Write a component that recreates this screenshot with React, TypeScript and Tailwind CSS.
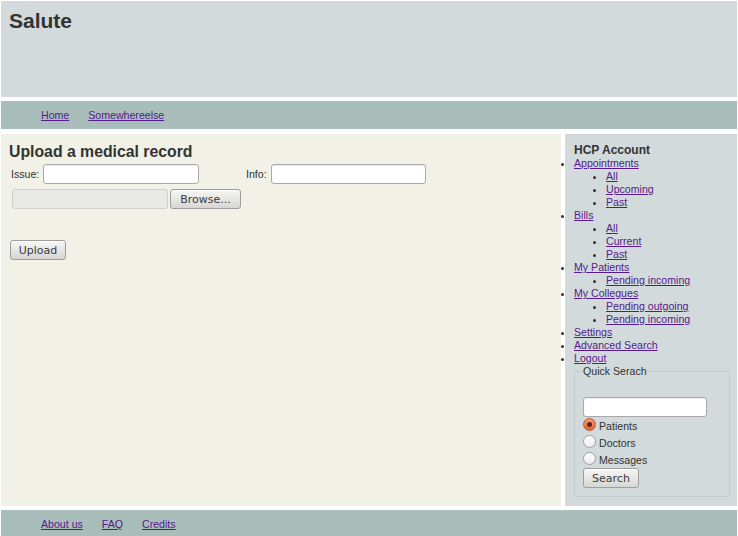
const links = "text-[#551a8b] underline";

function Btn({ children, className = "" }: { children: React.ReactNode; className?: string }) {
  return (
    <button
      className={`h-[20px] rounded-[3px] border border-[#9d9d9d] bg-gradient-to-b from-[#f6f6f5] to-[#d6d6d4] font-['DejaVu_Sans',sans-serif] text-[11px] leading-none text-[#3c3c3c] shadow-[inset_0_1px_0_#fff] ${className}`}
    >
      {children}
    </button>
  );
}

function TextBox({ className = "" }: { className?: string }) {
  return (
    <input
      type="text"
      className={`h-[20px] rounded-[3px] border border-[#a9a9a9] bg-white shadow-[inset_0_1px_1px_rgba(0,0,0,0.08)] outline-none ${className}`}
    />
  );
}

function Radio({ label, checked = false }: { label: string; checked?: boolean }) {
  return (
    <label className="flex h-[17px] items-start">
      {checked ? (
        <span className="mt-[1px] flex h-[13px] w-[13px] items-center justify-center rounded-full border border-[#c0582e] bg-gradient-to-b from-[#f79a72] to-[#e5612f]">
          <span className="h-[5px] w-[5px] rounded-full bg-[#5a2a16]" />
        </span>
      ) : (
        <span className="mt-[1px] h-[13px] w-[13px] rounded-full border border-[#9f9f9f] bg-gradient-to-b from-white to-[#ececec]" />
      )}
      <span className="ml-[3px] mt-[3px] leading-[13px]">{label}</span>
    </label>
  );
}

type Item = { label: string; children?: string[] };

const menu: Item[] = [
  { label: "Appointments", children: ["All", "Upcoming", "Past"] },
  { label: "Bills", children: ["All", "Current", "Past"] },
  { label: "My Patients", children: ["Pending incoming"] },
  { label: "My Collegues", children: ["Pending outgoing", "Pending incoming"] },
  { label: "Settings" },
  { label: "Advanced Search" },
  { label: "Logout" },
];

export default function App() {
  return (
    <div className="min-h-screen bg-white px-px pt-px font-['Liberation_Sans',Arial,sans-serif] text-[10.6px] text-[#333]">
      {/* header */}
      <div className="h-[96px] bg-[#d2dadb] px-[8px] pt-[8px]">
        <h1 className="text-[21px] font-bold leading-[24px]">Salute</h1>
      </div>

      {/* nav */}
      <div className="mt-[4px] flex h-[28px] items-center gap-[19px] bg-[#a9bdbb] pl-[40px] pt-[2px]">
        <a className={links}>Home</a>
        <a className={links}>Somewhereelse</a>
      </div>

      {/* main */}
      <div className="mt-[5px] flex h-[372px] gap-[4px]">
        <div className="flex-1 bg-[#f1f1e7] px-[8px] pt-[8px]">
          <h2 className="text-[15.8px] font-bold leading-[20px]">Upload a medical record</h2>
          <div className="mt-[2px] flex items-center">
            <span className="ml-[2px] w-[32px] pt-[2px]">Issue:</span>
            <TextBox className="w-[156px]" />
            <span className="ml-[47px] w-[25px] pt-[2px]">Info:</span>
            <TextBox className="w-[155px]" />
          </div>
          <div className="mt-[5px] flex items-center gap-[2px] pl-[3px]">
            <div className="h-[20px] w-[156px] rounded-[3px] border border-[#cfcfcc] bg-[#e8e8e6]" />
            <Btn className="w-[71px]">Browse...</Btn>
          </div>
          <div className="mt-[31px] pl-[1px]">
            <Btn className="w-[56px]">Upload</Btn>
          </div>
        </div>

        <div className="w-[172px] bg-[#d2dadb] pt-[9px]">
          <h3 className="ml-[9px] text-[12px] font-bold leading-[14px]">HCP Account</h3>
          <ul className="list-disc pl-[9px] leading-[13px]">
            {menu.map((m, i) => (
              <li key={i}>
                <a className={links}>{m.label}</a>
                {m.children && (
                  <ul className="list-disc pl-[32px]">
                    {m.children.map((c, j) => (
                      <li key={j}>
                        <a className={links}>{c}</a>
                      </li>
                    ))}
                  </ul>
                )}
              </li>
            ))}
          </ul>
          <fieldset className="ml-[9px] w-[156px] border border-[#c3cbcb] px-[8px] pb-[8px]">
            <legend className="leading-[13px]">Quick Serach</legend>
            <TextBox className="mt-[19px] block h-[18px] w-[124px]" />
            <Radio label="Patients" checked />
            <Radio label="Doctors" />
            <Radio label="Messages" />
            <Btn className="w-[56px]">Search</Btn>
          </fieldset>
        </div>
      </div>

      {/* footer */}
      <div className="mt-[4px] flex h-[28px] items-center gap-[19px] bg-[#a9bdbb] pl-[40px] pt-[2px]">
        <a className={links}>About us</a>
        <a className={links}>FAQ</a>
        <a className={links}>Credits</a>
      </div>
    </div>
  );
}
